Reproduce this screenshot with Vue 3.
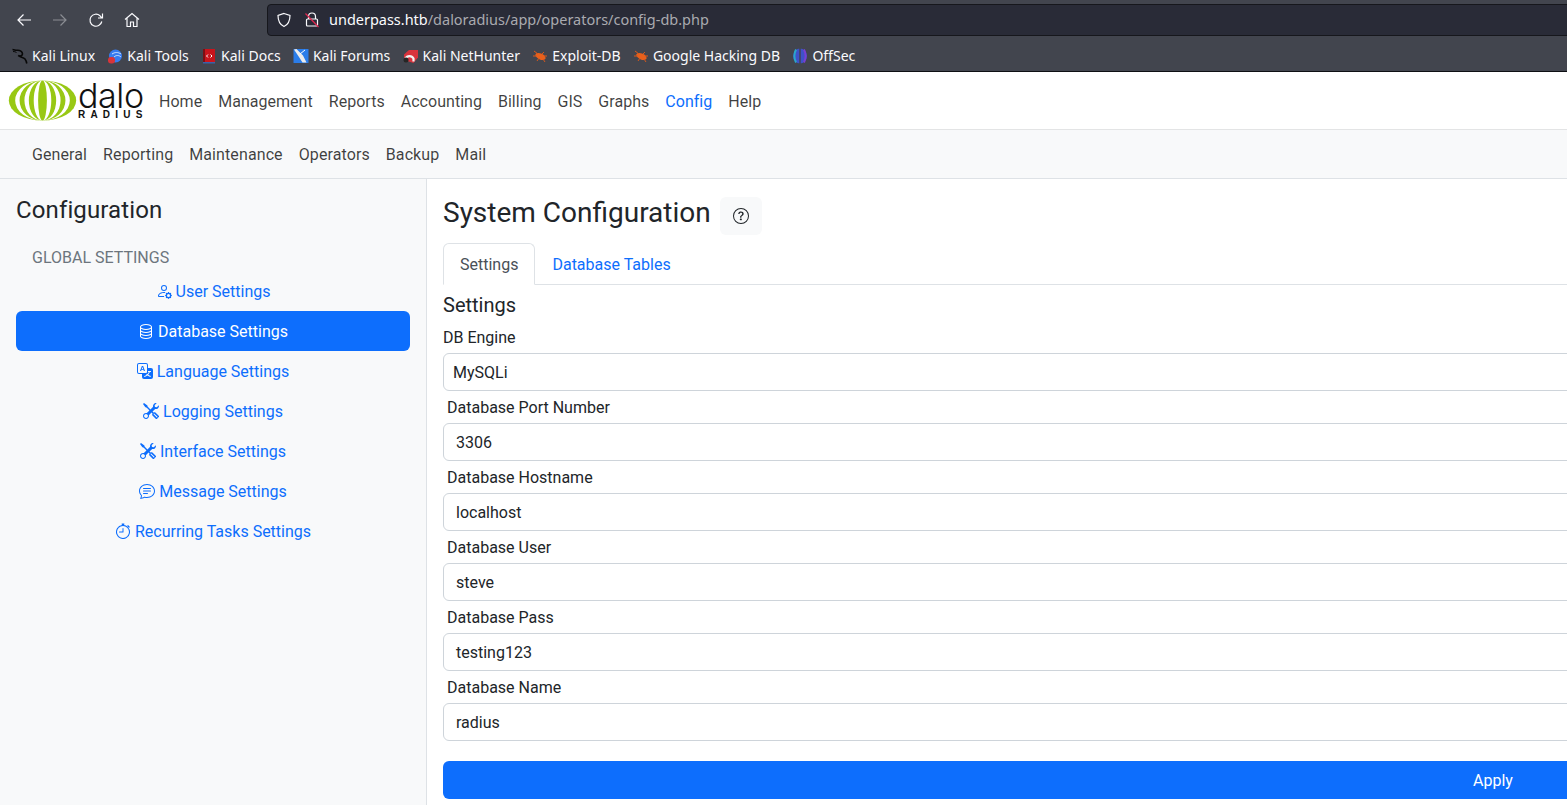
<script setup>
const bookmarks = [
  { label: 'Kali Linux', kind: 'kali' },
  { label: 'Kali Tools', kind: 'tools' },
  { label: 'Kali Docs', kind: 'docs' },
  { label: 'Kali Forums', kind: 'forums' },
  { label: 'Kali NetHunter', kind: 'hunter' },
  { label: 'Exploit-DB', kind: 'bug' },
  { label: 'Google Hacking DB', kind: 'bug' },
  { label: 'OffSec', kind: 'offsec' },
]
const mainNav = ['Home', 'Management', 'Reports', 'Accounting', 'Billing', 'GIS', 'Graphs', 'Config', 'Help']
const subNav = ['General', 'Reporting', 'Maintenance', 'Operators', 'Backup', 'Mail']
const side = [
  { label: 'User Settings', icon: 'user' },
  { label: 'Database Settings', icon: 'db', active: true },
  { label: 'Language Settings', icon: 'lang' },
  { label: 'Logging Settings', icon: 'tools' },
  { label: 'Interface Settings', icon: 'tools' },
  { label: 'Message Settings', icon: 'chat' },
  { label: 'Recurring Tasks Settings', icon: 'watch' },
]
const icons = {
  user: ['M11 5a3 3 0 1 1-6 0 3 3 0 0 1 6 0M8 7a2 2 0 1 0 0-4 2 2 0 0 0 0 4m.256 7a4.5 4.5 0 0 1-.229-1.004H3c.001-.246.154-.986.832-1.664C4.484 10.68 5.711 10 8 10q.39 0 .74.025c.226-.341.496-.65.804-.918Q8.844 9.002 8 9c-5 0-6 3-6 4s1 1 1 1zm3.63-4.54c.18-.613 1.048-.613 1.229 0l.043.148a.64.64 0 0 0 .921.382l.136-.074c.561-.306 1.175.308.87.869l-.075.136a.64.64 0 0 0 .382.92l.149.045c.612.18.612 1.048 0 1.229l-.15.043a.64.64 0 0 0-.38.921l.074.136c.305.561-.309 1.175-.87.87l-.136-.075a.64.64 0 0 0-.92.382l-.045.149c-.18.612-1.048.612-1.229 0l-.043-.15a.64.64 0 0 0-.921-.38l-.136.074c-.561.305-1.175-.309-.87-.87l.075-.136a.64.64 0 0 0-.382-.92l-.148-.045c-.613-.18-.613-1.048 0-1.229l.148-.043a.64.64 0 0 0 .382-.921l-.074-.136c-.306-.561.308-1.175.869-.87l.136.075a.64.64 0 0 0 .92-.382zM14 12.500a1.500 1.500 0 1 0-3 0 1.500 1.500 0 0 0 3 0'],
  db: ['M4.318 2.687C5.234 2.271 6.536 2 8 2s2.766.27 3.682.687C12.644 3.125 13 3.627 13 4c0 .374-.356.875-1.318 1.313C10.766 5.729 9.464 6 8 6s-2.766-.27-3.682-.687C3.356 4.875 3 4.373 3 4c0-.374.356-.875 1.318-1.313M13 5.698V7c0 .374-.356.875-1.318 1.313C10.766 8.729 9.464 9 8 9s-2.766-.27-3.682-.687C3.356 7.875 3 7.373 3 7V5.698c.271.202.58.378.904.525C4.978 6.711 6.427 7 8 7s3.022-.289 4.096-.777A5 5 0 0 0 13 5.698M14 4c0-1.007-.875-1.755-1.904-2.223C11.022 1.289 9.573 1 8 1s-3.022.289-4.096.777C2.875 2.245 2 2.993 2 4v9c0 1.007.875 1.755 1.904 2.223C4.978 15.710 6.427 16 8 16s3.022-.289 4.096-.777C13.125 14.755 14 14.007 14 13zm-1 4.698V10c0 .374-.356.875-1.318 1.313C10.766 11.729 9.464 12 8 12s-2.766-.27-3.682-.687C3.356 10.875 3 10.373 3 10V8.698c.271.202.58.378.904.525C4.978 9.710 6.427 10 8 10s3.022-.289 4.096-.777A5 5 0 0 0 13 8.698m0 3V13c0 .374-.356.875-1.318 1.313C10.766 14.729 9.464 15 8 15s-2.766-.27-3.682-.687C3.356 13.875 3 13.373 3 13v-1.302c.271.202.58.378.904.525C4.978 12.710 6.427 13 8 13s3.022-.289 4.096-.777c.324-.147.633-.323.904-.525'],
  lang: ['M4.545 6.714 4.110 8H3l1.862-5h1.284L8 8H6.833l-.435-1.286zm1.634-.736L5.500 3.956h-.049l-.679 2.022z', 'M0 2a2 2 0 0 1 2-2h7a2 2 0 0 1 2 2v3h3a2 2 0 0 1 2 2v7a2 2 0 0 1-2 2H7a2 2 0 0 1-2-2v-3H2a2 2 0 0 1-2-2zm2-1a1 1 0 0 0-1 1v7a1 1 0 0 0 1 1h7a1 1 0 0 0 1-1V2a1 1 0 0 0-1-1zm7.138 9.995q.289.451.630.846c-.748.575-1.673 1.001-2.768 1.292.178.217.451.635.555.867 1.125-.359 2.080-.844 2.886-1.494.777.665 1.739 1.165 2.930 1.472.133-.254.414-.673.629-.890-1.125-.253-2.057-.694-2.820-1.284.681-.747 1.222-1.651 1.621-2.757H14V8h-3v1.047h.765c-.318.844-.740 1.546-1.272 2.130a6 6 0 0 1-.415-.492 2 2 0 0 1-.940.310'],
  tools: ['M1 0 0 1l2.200 3.081a1 1 0 0 0 .815.419h.070a1 1 0 0 1 .708.293l2.675 2.675-2.617 2.654A3.003 3.003 0 0 0 0 13a3 3 0 1 0 5.878-.851l2.654-2.617.968.968-.305.914a1 1 0 0 0 .242 1.023l3.270 3.270a.997.997 0 0 0 1.414 0l1.586-1.586a.997.997 0 0 0 0-1.414l-3.270-3.270a1 1 0 0 0-1.023-.242L10.500 9.500l-.960-.960 2.680-2.643A3.005 3.005 0 0 0 16 3q0-.405-.102-.777l-2.140 2.141L12 4l-.364-1.757L13.777.102a3 3 0 0 0-3.675 3.676L7.462 6.460 4.793 3.793a1 1 0 0 1-.293-.707v-.071a1 1 0 0 0-.419-.814zm9.646 10.646a.5.5 0 0 1 .708 0l2.914 2.915a.5.5 0 0 1-.707.707l-2.915-2.914a.5.5 0 0 1 0-.708M3 11l.471.242.529.026.287.445.445.287.026.529L5 13l-.242.471-.026.529-.445.287-.287.445-.529.026L3 15l-.471-.242L2 14.732l-.287-.445L1.268 14l-.026-.529L1 13l.242-.471.026-.529.445-.287.287-.445.529-.026z'],
  chat: ['M2.678 11.894a1 1 0 0 1 .287.801 11 11 0 0 1-.398 2c1.395-.323 2.247-.697 2.634-.893a1 1 0 0 1 .710-.074A8 8 0 0 0 8 14c3.996 0 7-2.807 7-6s-3.004-6-7-6-7 2.808-7 6c0 1.468.617 2.830 1.678 3.894m-.493 3.905a22 22 0 0 1-.713.129c-.2.032-.352-.176-.273-.362a10 10 0 0 0 .244-.637l.003-.010c.248-.720.450-1.548.524-2.319C.743 11.370 0 9.760 0 8c0-3.866 3.582-7 8-7s8 3.134 8 7-3.582 7-8 7a9 9 0 0 1-2.347-.306c-.52.263-1.639.742-3.468 1.105', 'M4 5.500a.5.5 0 0 1 .5-.5h7a.5.5 0 0 1 0 1h-7a.5.5 0 0 1-.5-.5M4 8a.5.5 0 0 1 .5-.5h7a.5.5 0 0 1 0 1h-7A.5.5 0 0 1 4 8m0 2.500a.5.5 0 0 1 .5-.5h4a.5.5 0 0 1 0 1h-4a.5.5 0 0 1-.5-.5'],
  watch: ['M8.500 5.600a.5.5 0 1 0-1 0v2.900h-3a.5.5 0 0 0 0 1H8a.5.5 0 0 0 .5-.5z', 'M6.500 1A.5.5 0 0 1 7 .5h2a.5.5 0 0 1 0 1v.570c1.360.196 2.594.780 3.584 1.640l.012-.013.354-.354-.354-.353a.5.5 0 0 1 .707-.708l1.414 1.415a.5.5 0 1 1-.707.707l-.353-.354-.354.354-.013.012A7 7 0 1 1 7 2.071V1.500a.5.5 0 0 1-.5-.5M8 3a6 6 0 1 0 .001 12A6 6 0 0 0 8 3'],
}
const fields = [
  { label: 'Database Port Number', value: '3306' },
  { label: 'Database Hostname', value: 'localhost' },
  { label: 'Database User', value: 'steve' },
  { label: 'Database Pass', value: 'testing123' },
  { label: 'Database Name', value: 'radius' },
]
const whiteBands = [[4.5, 9], [14, 18.5], [23.5, 28]]
function band([a, b]) {
  return `M35 .5A${b} 20.500 0 0 0 35 41.500A${a} 20.500 0 0 1 35 .5zM35 .5A${b} 20.500 0 0 1 35 41.500A${a} 20.500 0 0 0 35 .5z`
}
</script>

<template>
  <div class="page">
    <header class="chrome">
      <div class="toolbar">
        <div class="tb-icons">
          <svg class="tb" viewBox="0 0 16 16"><path d="M15 8H2M7.500 2.500 2 8l5.500 5.500" /></svg>
          <svg class="tb dim" viewBox="0 0 16 16"><path d="M1 8h13M8.500 2.500 14 8l-5.500 5.500" /></svg>
          <svg class="tb" viewBox="0 0 16 16"><path d="M13.800 9.500A6 6 0 1 1 12 3.800L14 6M14.500 1.500V6H10" /></svg>
          <svg class="tb" viewBox="0 0 16 16"><path d="M1 7.500 8 1.500l7 6M3 6v8.500h3.500V10h3v4.500H13V6" /></svg>
        </div>
        <div class="urlbar">
          <svg class="shield" viewBox="0 0 16 16"><path d="M8 1.500 14 3.500c0 5.500-1.500 9-6 11-4.500-2-6-5.500-6-11z" /></svg>
          <svg class="lock" viewBox="0 0 16 16"><path d="M4.500 7V4.500a3.500 3.500 0 0 1 7 0V7M3.500 7h9a1 1 0 0 1 1 1v5a1 1 0 0 1-1 1h-9a1 1 0 0 1-1-1V8a1 1 0 0 1 1-1z" /><path class="slash" d="M1.500 1.500 14.500 15" /></svg>
          <span class="url"><span class="host">underpass.htb</span>/daloradius/app/operators/config-db.php</span>
        </div>
      </div>
      <div class="bookmarks">
        <span v-for="b in bookmarks" :key="b.label" class="bm">
          <svg class="bm-ic" viewBox="0 0 16 16">
            <g v-if="b.kind === 'kali'" fill="none" stroke="#080808">
              <path d="M.5 1.500c2 .2 3 1 4.500.8 3-.3 5.500 1.500 5.500 3.700 0 1.700-2.300 2.500-4.200 1.500 1.500 2 5 1.500 6.700 3.500.9 1.100 1.400 2.500 1.800 4.500" stroke-width="1.600" />
              <path d="M1 3.500c1.500 0 2.500.3 3.500 1" stroke-width="1" />
            </g>
            <template v-else-if="b.kind === 'tools'">
              <circle cx="8.500" cy="8" r="6.500" fill="#367bf0" />
              <path d="M5 6c3-2 6-2 9 0M7 9c2-2 5-2 7 0" stroke="#cfe2ff" fill="none" />
              <rect x="1" y="9" width="7" height="6.500" rx="3" fill="#d8343a" />
            </template>
            <template v-else-if="b.kind === 'docs'">
              <rect x="2" y="1" width="12" height="14" fill="#c9141c" />
              <rect x="2" y="1" width="2" height="14" fill="#7d0f14" />
              <rect x="2" y="14" width="12" height="1.500" fill="#3a62a8" />
              <path d="M7 6.500 5.500 8 7 9.500M9.500 6.500 11 8 9.500 9.500" stroke="#fff" fill="none" />
            </template>
            <template v-else-if="b.kind === 'forums'">
              <rect x="0.500" y="1" width="15" height="14" fill="#2b7de9" />
              <path d="M1 1.500 3.500 1 10 7.500l3.500 7H9.500L6 9z" fill="#ececec" />
              <path d="M7 6l5-4" stroke="#fff" />
            </template>
            <template v-else-if="b.kind === 'hunter'">
              <path d="M6 2h9v7.500L10.500 15 1 12V6.500z" fill="#d8323c" />
              <path d="M2.500 10.500a4.500 4.500 0 0 1 8 0v3" stroke="#f2f2f2" stroke-width="2.200" fill="none" />
              <circle cx="3" cy="12" r="2.500" fill="#262626" />
            </template>
            <template v-else-if="b.kind === 'bug'">
              <ellipse cx="8.500" cy="8.500" rx="5.500" ry="3" fill="#e8601c" transform="rotate(25 8.500 8.500)" />
              <path d="M2 3l4 3M1 8h4M5 13l2-3M12 4l-2 2M15 8h-3M13 14l-2-3" stroke="#d9581a" fill="none" />
            </template>
            <template v-else>
              <ellipse cx="8" cy="8" rx="7" ry="7.500" fill="#3f51c8" />
              <path d="M4 1.500c-2 4-2 9 0 13" stroke="#2aa7c9" stroke-width="2" fill="none" />
              <path d="M12 1.500c2 4 2 9 0 13" stroke="#7a3fd0" stroke-width="2" fill="none" />
              <rect x="7.300" y="0" width="1.400" height="16" fill="#3f444e" />
            </template>
          </svg>
          <span>{{ b.label }}</span>
        </span>
      </div>
    </header>

    <nav class="topnav">
      <div class="logo">
        <svg class="globe" viewBox="0 0 70 42">
          <ellipse cx="35" cy="21" rx="34.500" ry="20.500" fill="#98c814" />
          <path v-for="(b, i) in whiteBands" :key="i" :d="band(b)" fill="#fff" />
        </svg>
        <span class="wordmark"><span class="dalo">dalo</span><span class="radius">RADIUS</span></span>
      </div>
      <a v-for="n in mainNav" :key="n" class="tn" :class="{ on: n === 'Config' }">{{ n }}</a>
    </nav>

    <nav class="subnav">
      <a v-for="n in subNav" :key="n" class="sn">{{ n }}</a>
    </nav>

    <div class="body">
      <aside class="sidebar">
        <h4 class="side-title">Configuration</h4>
        <div class="side-head">GLOBAL SETTINGS</div>
        <a v-for="s in side" :key="s.label" class="side-item" :class="{ active: s.active }">
          <svg class="si" viewBox="0 0 16 16"><path v-for="(d, i) in icons[s.icon]" :key="i" :d="d" /></svg>
          <span class="si-text">{{ s.label }}</span>
        </a>
      </aside>

      <main class="content">
        <div class="form-col">
          <div class="title-row">
            <h2 class="title">System Configuration</h2>
            <button class="help">
              <svg viewBox="0 0 16 16"><path d="M8 15A7 7 0 1 1 8 1a7 7 0 0 1 0 14m0 1A8 8 0 1 0 8 0a8 8 0 0 0 0 16" /><path d="M5.255 5.786a.237.237 0 0 0 .241.247h.825c.138 0 .248-.113.266-.25.090-.656.540-1.134 1.342-1.134.686 0 1.314.343 1.314 1.168 0 .635-.374.927-.965 1.371-.673.489-1.206 1.060-1.168 1.987l.003.217a.25.25 0 0 0 .25.246h.811a.25.25 0 0 0 .25-.25v-.105c0-.718.273-.927 1.010-1.486.609-.463 1.244-.977 1.244-2.056 0-1.511-1.276-2.241-2.673-2.241-1.267 0-2.655.590-2.750 2.286m1.557 5.763c0 .533.425.927 1.010.927.609 0 1.028-.394 1.028-.927 0-.552-.420-.940-1.029-.940-.584 0-1.009.388-1.009.940" /></svg>
            </button>
          </div>
          <div class="tabs">
            <a class="tab current">Settings</a>
            <a class="tab">Database Tables</a>
          </div>
          <h5 class="sec">Settings</h5>
          <label class="lbl first">DB Engine</label>
          <div class="input plain">MySQLi</div>
          <template v-for="f in fields" :key="f.label">
            <label class="lbl">{{ f.label }}</label>
            <div class="input">{{ f.value }}</div>
          </template>
          <button class="apply">Apply</button>
        </div>
      </main>
    </div>
  </div>
</template>

<style>
html, body { margin: 0; height: 100%; overflow: hidden; background: #fff; }
</style>

<style scoped>
.page { width: 1567px; height: 805px; overflow: hidden; font-family: Roboto, sans-serif; font-size: 16px; line-height: 24px; color: #212529; display: flex; flex-direction: column; }
.chrome { flex: none; height: 72px; background: #42454e; border-bottom: 1px solid #0e0f13; box-sizing: border-box; }
.toolbar { height: 40px; display: flex; align-items: center; box-sizing: border-box; }
.tb-icons { display: flex; gap: 20px; padding-left: 16px; width: 267px; box-sizing: border-box; }
.tb { width: 16px; height: 16px; fill: none; stroke: #fbfbfe; stroke-width: 1.200; flex: none; }
.tb.dim { stroke: #8b8d93; }
.urlbar { flex: 1; height: 32px; margin-right: -6px; background: #292b37; border: 1px solid #16171c; border-radius: 4px; display: flex; align-items: center; box-sizing: border-box; padding-left: 8px; font-family: "Noto Sans", sans-serif; font-size: 14.470px; }
.shield { width: 16px; height: 16px; fill: none; stroke: #fbfbfe; stroke-width: 1.200; flex: none; }
.lock { width: 16px; height: 16px; fill: none; stroke: #fbfbfe; stroke-width: 1.200; margin-left: 12px; flex: none; }
.slash { stroke: #e22850; }
.url { margin-left: 9px; color: #a9aab0; }
.host { color: #fbfbfe; }
.bookmarks { height: 31px; display: flex; align-items: center; padding-left: 12px; gap: 12.300px; font-family: "Noto Sans", sans-serif; font-size: 14px; color: #fbfbfe; }
.bm { display: flex; align-items: center; gap: 4px; white-space: nowrap; }
.bm-ic { width: 16px; height: 16px; flex: none; }
.topnav { flex: none; height: 58px; box-sizing: border-box; border-bottom: 1px solid #e3e4e5; background: #fff; display: flex; align-items: center; padding-left: 8px; }
.logo { display: flex; align-items: center; width: 143px; flex: none; }
.globe { width: 69px; height: 41px; flex: none; }
.wordmark { display: flex; flex-direction: column; margin-left: 1px; white-space: nowrap; width: 65px; }
.dalo { font-family: Inter, sans-serif; font-weight: 300; font-size: 34px; line-height: 28px; letter-spacing: -0.400px; color: #111; }
.radius { font-family: "Liberation Sans", sans-serif; font-weight: 700; font-size: 10px; line-height: 10px; letter-spacing: 5.200px; color: #111; }
.tn { padding: 2px 8px 0; color: rgba(0, 0, 0, .75); white-space: nowrap; letter-spacing: .03px; }
.tn.on { color: #0d6efd; }
.subnav { flex: none; height: 49px; box-sizing: border-box; background: #f8f9fa; border-bottom: 1px solid #dee2e6; display: flex; align-items: center; padding-left: 24px; }
.sn { padding: 2px 8px 0; color: rgba(0, 0, 0, .75); letter-spacing: .1px; }
.body { flex: 1; display: flex; min-height: 0; }
.sidebar { flex: none; width: 427px; box-sizing: border-box; background: #f8f9fa; border-right: 1px solid #dee2e6; padding: 16px 16px 0; display: flex; flex-direction: column; }
.side-title { margin: 0; font-size: 24px; font-weight: 400; line-height: 30px; letter-spacing: .12px; }
.side-head { margin-top: 18px; padding-left: 16px; height: 28px; line-height: 30px; color: #6c757d; }
.side-item { height: 40px; display: flex; align-items: center; justify-content: center; gap: 4px; color: #0d6efd; border-radius: 6px; }
.si-text { padding-top: 2px; }
.side-item.active { background: #0d6efd; color: #fff; }
.si { width: 16px; height: 16px; fill: currentColor; flex: none; }
.content { flex: 1; min-width: 0; overflow: hidden; padding: 0 0 0 16px; }
.form-col { width: 2100px; }
.title-row { display: flex; align-items: flex-start; gap: 9px; height: 64px; }
.title { margin: 17px 0 0; font-size: 28px; font-weight: 400; line-height: 34px; }
.help { width: 42px; height: 38px; padding: 0; border: 0; background: #f8f9fa; border-radius: 6px; margin-top: 18px; display: flex; align-items: center; justify-content: center; }
.help svg { width: 16px; height: 16px; fill: #212529; }
.tabs { display: flex; height: 42px; box-sizing: border-box; border-bottom: 1px solid #dee2e6; }
.tab { height: 42px; box-sizing: border-box; padding: 9px 16px 7px; border: 1px solid transparent; border-radius: 6px 6px 0 0; color: #0d6efd; }
.tab.current { color: #495057; background: #fff; border-color: #dee2e6 #dee2e6 #fff; }
.sec { margin: 0; font-size: 20px; font-weight: 400; line-height: 24px; padding-top: 8px; }
.lbl { display: block; height: 32px; line-height: 34px; padding-left: 4px; }
.lbl.first { padding: 9px 0 3px; height: auto; line-height: 24px; }
.input { height: 38px; box-sizing: border-box; border: 1px solid #ced4da; border-radius: 6px; padding: 7px 12px 5px; background: #fff; color: #212529; }
.input.plain { padding-left: 9px; }
.apply { display: block; width: 100%; height: 38px; margin-top: 20px; padding: 1px 0 0; border: 0; border-radius: 6px; background: #0d6efd; color: #fff; font: inherit; }
</style>
